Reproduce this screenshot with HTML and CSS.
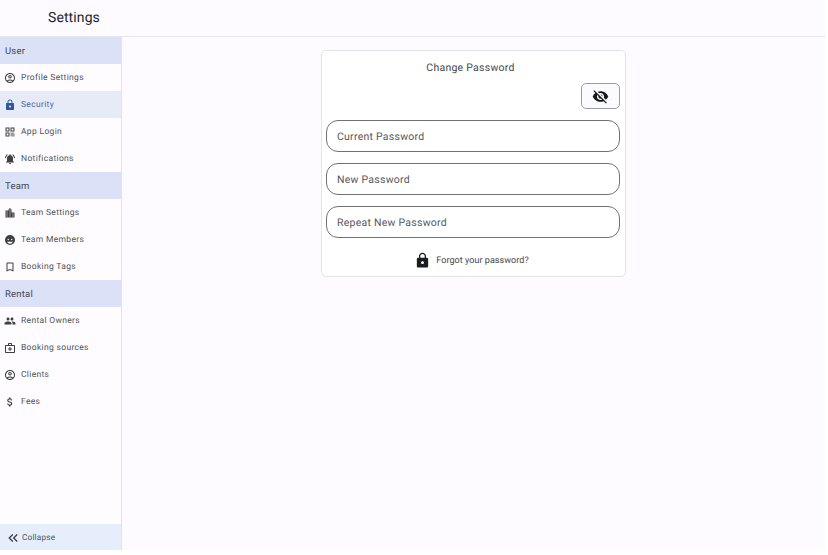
FILE: index.html
```html
<!DOCTYPE html>
<html lang="en">
<head>
    <meta charset="UTF-8">
    <meta name="viewport" content="width=device-width, initial-scale=1.0">
    <title>Settings</title>
    <link rel="stylesheet" href="styles.css">
</head>
<body>

<div class="app">
    <header class="topbar">
        <h1>Settings</h1>
    </header>

    <div class="content">
        <nav class="sidebar">
            <div class="nav-list">
                <div class="nav-section">User</div>
                <a class="nav-item">
                    <svg class="nav-icon" viewBox="0 0 24 24"><path d="M12 2C6.48 2 2 6.48 2 12s4.48 10 10 10 10-4.48 10-10S17.52 2 12 2zM7.35 18.5C8.66 17.56 10.26 17 12 17s3.34.56 4.65 1.5C15.34 19.44 13.74 20 12 20s-3.34-.56-4.65-1.5zm10.79-1.38C16.45 15.8 14.32 15 12 15s-4.45.8-6.14 2.12C4.7 15.73 4 13.95 4 12c0-4.42 3.58-8 8-8s8 3.58 8 8c0 1.95-.7 3.73-1.86 5.12zM12 6c-1.93 0-3.5 1.57-3.5 3.5S10.07 13 12 13s3.5-1.57 3.5-3.5S13.93 6 12 6zm0 5c-.83 0-1.5-.67-1.5-1.5S11.17 8 12 8s1.5.67 1.5 1.5S12.83 11 12 11z"/></svg>
                    Profile Settings
                </a>
                <a class="nav-item active">
                    <svg class="nav-icon" viewBox="0 0 24 24"><path d="M18 8h-1V6c0-2.76-2.24-5-5-5S7 3.24 7 6v2H6c-1.1 0-2 .9-2 2v10c0 1.1.9 2 2 2h12c1.1 0 2-.9 2-2V10c0-1.1-.9-2-2-2zm-6 9c-1.1 0-2-.9-2-2s.9-2 2-2 2 .9 2 2-.9 2-2 2zm3.1-9H8.9V6c0-1.71 1.39-3.1 3.1-3.1 1.71 0 3.1 1.39 3.1 3.1v2z"/></svg>
                    Security
                </a>
                <a class="nav-item">
                    <svg class="nav-icon" viewBox="0 0 24 24"><path d="M3 11h8V3H3v8zm2-6h4v4H5V5zM3 21h8v-8H3v8zm2-6h4v4H5v-4zM13 3v8h8V3h-8zm6 6h-4V5h4v4zM13 13h2v2h-2zM15 15h2v2h-2zM13 17h2v2h-2zM17 17h2v2h-2zM19 19h2v2h-2zM15 19h2v2h-2zM17 13h2v2h-2zM19 15h2v2h-2z"/></svg>
                    App Login
                </a>
                <a class="nav-item">
                    <svg class="nav-icon" viewBox="0 0 24 24"><path d="M7.58 4.08 6.15 2.65C3.75 4.48 2.17 7.3 2.03 10.5h2c.15-2.65 1.51-4.97 3.55-6.42zm12.39 6.42h2c-.15-3.2-1.73-6.02-4.12-7.85l-1.42 1.43c2.02 1.45 3.39 3.77 3.54 6.42zM18 11c0-3.07-1.64-5.64-4.5-6.32V4c0-.83-.67-1.5-1.5-1.5s-1.5.67-1.5 1.5v.68C7.63 5.36 6 7.92 6 11v5l-2 2v1h16v-1l-2-2v-5zm-6 11c.14 0 .27-.01.4-.04.65-.14 1.18-.58 1.44-1.18.1-.24.15-.5.15-.78h-4c.01 1.1.9 2 2.01 2z"/></svg>
                    Notifications
                </a>

                <div class="nav-section">Team</div>
                <a class="nav-item">
                    <svg class="nav-icon" viewBox="0 0 24 24"><path d="M15 11V5l-3-3-3 3v2H3v14h18V11h-6zm-8 8H5v-2h2v2zm0-4H5v-2h2v2zm0-4H5V9h2v2zm6 8h-2v-2h2v2zm0-4h-2v-2h2v2zm0-4h-2V9h2v2zm0-4h-2V5h2v2zm6 12h-2v-2h2v2zm0-4h-2v-2h2v2z"/></svg>
                    Team Settings
                </a>
                <a class="nav-item">
                    <svg class="nav-icon" viewBox="0 0 24 24"><path fill-rule="evenodd" d="M12 2a10 10 0 1 0 0 20 10 10 0 0 0 0-20zM8.5 9.5a1.4 1.4 0 1 1 0 2.8 1.4 1.4 0 0 1 0-2.8zm7 0a1.4 1.4 0 1 1 0 2.8 1.4 1.4 0 0 1 0-2.8zM12 19.500c-2.600 0-4.800-1.600-5.600-4h11.200c-.8 2.400-3 4-5.600 4z"/></svg>
                    Team Members
                </a>
                <a class="nav-item">
                    <svg class="nav-icon" viewBox="0 0 24 24"><path d="M17 3H7c-1.1 0-1.99.9-1.99 2L5 21l7-3 7 3V5c0-1.1-.9-2-2-2zm0 15l-5-2.18L7 18V5h10v13z"/></svg>
                    Booking Tags
                </a>

                <div class="nav-section">Rental</div>
                <a class="nav-item">
                    <svg class="nav-icon" viewBox="0 0 24 24"><path d="M16 11c1.66 0 2.99-1.34 2.99-3S17.66 5 16 5c-1.66 0-3 1.34-3 3s1.34 3 3 3zm-8 0c1.66 0 2.99-1.34 2.99-3S9.66 5 8 5C6.34 5 5 6.34 5 8s1.34 3 3 3zm0 2c-2.33 0-7 1.17-7 3.5V19h14v-2.5c0-2.33-4.67-3.5-7-3.5zm8 0c-.29 0-.62.02-.97.05 1.16.84 1.97 1.97 1.97 3.45V19h6v-2.5c0-2.33-4.67-3.5-7-3.5z"/></svg>
                    Rental Owners
                </a>
                <a class="nav-item">
                    <svg class="nav-icon" viewBox="0 0 24 24"><path d="M20 6h-4V4c0-1.1-.9-2-2-2h-4c-1.1 0-2 .9-2 2v2H4c-1.1 0-2 .9-2 2v12c0 1.1.9 2 2 2h16c1.1 0 2-.9 2-2V8c0-1.1-.9-2-2-2zM10 4h4v2h-4V4zm10 16H4V8h16v12zM13 10h-2v3H8v2h3v3h2v-3h3v-2h-3z"/></svg>
                    Booking sources
                </a>
                <a class="nav-item">
                    <svg class="nav-icon" viewBox="0 0 24 24"><path d="M12 2C6.48 2 2 6.48 2 12s4.48 10 10 10 10-4.48 10-10S17.52 2 12 2zM7.35 18.5C8.66 17.56 10.26 17 12 17s3.34.56 4.65 1.5C15.34 19.44 13.74 20 12 20s-3.34-.56-4.65-1.5zm10.79-1.38C16.45 15.8 14.32 15 12 15s-4.45.8-6.14 2.12C4.7 15.73 4 13.95 4 12c0-4.42 3.58-8 8-8s8 3.58 8 8c0 1.95-.7 3.73-1.86 5.12zM12 6c-1.93 0-3.5 1.57-3.5 3.5S10.07 13 12 13s3.5-1.57 3.5-3.5S13.93 6 12 6zm0 5c-.83 0-1.5-.67-1.5-1.5S11.17 8 12 8s1.5.67 1.5 1.5S12.83 11 12 11z"/></svg>
                    Clients
                </a>
                <a class="nav-item">
                    <svg class="nav-icon" viewBox="0 0 24 24"><path d="M11.8 10.9c-2.27-.59-3-1.2-3-2.15 0-1.09 1.01-1.85 2.7-1.85 1.78 0 2.44.85 2.5 2.1h2.21c-.07-1.72-1.12-3.3-3.21-3.81V3h-3v2.16c-1.94.42-3.5 1.68-3.5 3.61 0 2.31 1.91 3.46 4.7 4.13 2.5.6 3 1.48 3 2.41 0 .69-.49 1.79-2.7 1.79-2.06 0-2.87-.92-2.98-2.1h-2.2c.12 2.19 1.76 3.42 3.68 3.83V21h3v-2.15c1.95-.37 3.5-1.5 3.5-3.55 0-2.84-2.43-3.81-4.7-4.4z"/></svg>
                    Fees
                </a>
            </div>

            <a class="collapse">
                <svg class="collapse-icon" viewBox="0 0 24 24"><path d="M17.59 18 19 16.59 14.42 12 19 7.41 17.59 6l-6 6z"/><path d="m11 18 1.41-1.41L7.83 12l4.58-4.59L11 6l-6 6z"/></svg>
                Collapse
            </a>
        </nav>

        <main class="main">
            <section class="card">
                <h2>Change Password</h2>

                <div class="toggle-row">
                    <button class="toggle" type="button">
                        <svg viewBox="0 0 24 24"><path d="M12 7c2.76 0 5 2.24 5 5 0 .65-.13 1.26-.36 1.83l2.92 2.92c1.51-1.26 2.7-2.89 3.43-4.75-1.73-4.39-6-7.5-11-7.5-1.4 0-2.74.25-3.98.7l2.16 2.16C10.74 7.13 11.35 7 12 7zM2 4.27l2.28 2.28.46.46C3.08 8.3 1.78 10.02 1 12c1.73 4.39 6 7.5 11 7.5 1.55 0 3.03-.3 4.38-.84l.42.42L19.73 22 21 20.73 3.27 3 2 4.27zM7.53 9.8l1.55 1.55c-.05.21-.08.43-.08.65 0 1.66 1.34 3 3 3 .22 0 .44-.03.65-.08l1.55 1.55c-.67.33-1.41.53-2.2.53-2.76 0-5-2.24-5-5 0-.79.2-1.53.53-2.2zm4.31-.78l3.15 3.15.02-.16c0-1.66-1.34-3-3-3l-.17.01z"/></svg>
                    </button>
                </div>

                <div class="field">Current Password</div>
                <div class="field">New Password</div>
                <div class="field">Repeat New Password</div>

                <a class="forgot">
                    <svg viewBox="0 0 24 24"><path d="M18 8h-1V6c0-2.76-2.24-5-5-5S7 3.24 7 6v2H6c-1.1 0-2 .9-2 2v10c0 1.1.9 2 2 2h12c1.1 0 2-.9 2-2V10c0-1.1-.9-2-2-2zm-6 9c-1.1 0-2-.9-2-2s.9-2 2-2 2 .9 2 2-.9 2-2 2zm3.1-9H8.9V6c0-1.71 1.39-3.1 3.1-3.1 1.71 0 3.1 1.39 3.1 3.1v2z"/></svg>
                    Forgot your password?
                </a>
            </section>
        </main>
    </div>
</div>

</body>
</html>
```

FILE: styles.css
```css
body {
    margin: 0;
    background-color: #ffffff;
    font-family: Roboto, "Liberation Sans", sans-serif;
    color: #44474e;
    text-rendering: geometricPrecision;
}

h1, h2 {
    margin: 0;
    font-weight: 400;
}

.app {
    display: flex;
    flex-direction: column;
    width: 825px;
    height: 550px;
    background-color: #fdfbff;
}

.topbar {
    height: 37px;
    box-sizing: border-box;
    padding-left: 48px;
    border-bottom: 1px solid #e6e6ea;
    flex-shrink: 0;
    display: flex;
    align-items: center;
}

.topbar h1 {
    font-size: 14px;
    letter-spacing: 0.1px;
    color: #24262b;
}

.content {
    display: flex;
    flex: 1;
    min-height: 0;
}

.sidebar {
    width: 122px;
    box-sizing: border-box;
    flex-shrink: 0;
    display: flex;
    flex-direction: column;
    justify-content: space-between;
    background-color: #fefcff;
    border-right: 1px solid #e2e2e8;
}

.nav-section {
    height: 27px;
    box-sizing: border-box;
    padding: 1px 0 0 5px;
    display: flex;
    align-items: center;
    background-color: #dbe2f8;
    font-size: 9.5px;
    letter-spacing: 0.2px;
}

.nav-item {
    height: 27px;
    box-sizing: border-box;
    padding: 1px 0 0 4px;
    display: flex;
    align-items: center;
    gap: 5px;
    font-size: 8.5px;
    letter-spacing: 0.32px;
    color: #50535a;
}

.nav-item.active {
    background-color: #e7ebf7;
    color: #4a68ab;
}

.nav-icon {
    width: 12px;
    height: 12px;
    fill: #3c3f45;
}

.nav-item.active .nav-icon {
    fill: #2f56a5;
}

.collapse {
    height: 26px;
    box-sizing: border-box;
    padding: 1px 0 0 5px;
    display: flex;
    align-items: center;
    gap: 1px;
    background-color: #e6edfb;
    font-size: 8.2px;
    letter-spacing: 0.2px;
    color: #50535a;
}

.collapse-icon {
    width: 16px;
    height: 16px;
    fill: #3c3f45;
}

.main {
    flex: 1;
    display: flex;
    justify-content: center;
    align-items: flex-start;
    padding-top: 13px;
}

.card {
    width: 294px;
    height: 225px;
    padding: 0 5px 0 4px;
    display: flex;
    flex-direction: column;
    background-color: #ffffff;
    border: 1px solid #e3e3e8;
    border-radius: 5px;
}

.card h2 {
    margin-top: 10px;
    padding-right: 5px;
    text-align: center;
    font-size: 10.5px;
    line-height: 13px;
    letter-spacing: 0.25px;
    color: #45484e;
}

.toggle-row {
    display: flex;
    justify-content: flex-end;
    margin-top: 9px;
}

.toggle {
    width: 39px;
    height: 26px;
    padding: 0;
    display: flex;
    align-items: center;
    justify-content: center;
    background-color: #fbfaff;
    border: 1px solid #9a9ca3;
    border-radius: 5px;
}

.toggle svg {
    width: 17px;
    height: 17px;
    fill: #17181c;
}

.field {
    height: 32px;
    box-sizing: border-box;
    margin-top: 11px;
    padding-left: 10px;
    display: flex;
    align-items: center;
    border: 1px solid #6f7177;
    border-radius: 12px;
    font-size: 10.5px;
    letter-spacing: 0.25px;
    color: #55585e;
}

.forgot {
    margin-top: 14px;
    padding-right: 3px;
    display: flex;
    align-items: center;
    justify-content: center;
    gap: 5px;
    font-size: 9px;
    letter-spacing: 0.05px;
    color: #45484e;
}

.forgot svg {
    width: 17px;
    height: 17px;
    fill: #1c1d21;
}
```
